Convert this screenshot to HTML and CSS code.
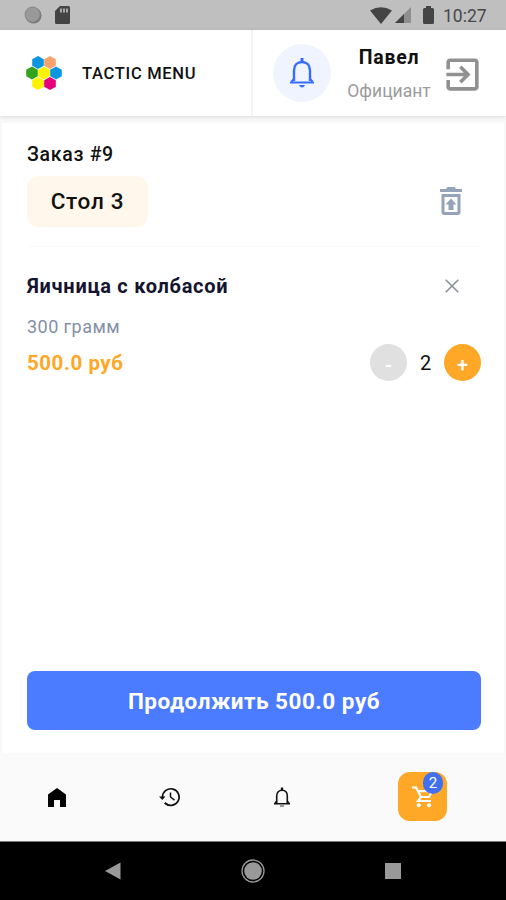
FILE: index.html
```html
<!DOCTYPE html>
<html lang="ru">
<head>
<meta charset="utf-8">
<title>Tactic Menu</title>
<link rel="stylesheet" href="styles.css">
</head>
<body>
<div class="statusbar">
  <svg width="18" height="18" viewBox="0 0 18 18"><circle cx="9.5" cy="9.5" r="8" fill="#777"/><circle cx="8.5" cy="8.5" r="7.5" fill="#999" stroke="#888"/></svg>
  <svg class="sd" width="15" height="18" viewBox="0 0 15 18"><path d="M5 0h8.500q1.500 0 1.500 1.500v15q0 1.500-1.500 1.500h-12Q0 18 0 16.500V5z" fill="#444"/><path d="M6 2.500v4M9 2.500v4M12 2.500v4" stroke="#bbb" stroke-width="1.700"/></svg>
  <span class="grow"></span>
  <svg width="22" height="17" viewBox="0 0 22 17"><path d="M0 3.500Q11-3 22 3.500L11 17z" fill="#444"/></svg>
  <svg class="signal" width="16" height="16" viewBox="0 0 16 16"><path d="M16 0v16H0z" fill="#8e8e8e"/><path d="M9 7v9H0z" fill="#444"/></svg>
  <svg class="battery" width="11" height="18" viewBox="0 0 11 18"><path d="M3 0h5v2h1.500Q11 2 11 3.500v13q0 1.500-1.500 1.500h-8Q0 18 0 16.500v-13Q0 2 1.500 2H3z" fill="#444"/></svg>
  <span class="clock">10:27</span>
</div>

<header class="header">
  <div class="brand">
    <svg width="36" height="36" viewBox="0 0 36 36">
      <path fill="#0c96e0" d="M12 1l5.800 3.200v6.600L12 14l-5.800-3.200V4.200z"/>
      <path fill="#f8a36c" d="M24 1l5.800 3.200v6.600L24 14l-5.800-3.200V4.200z"/>
      <path fill="#32a31b" d="M6 11.500l5.800 3.200v6.600L6 24.500.2 21.300v-6.600z"/>
      <path fill="#fff200" d="M18 11.500l5.800 3.200v6.600L18 24.500l-5.800-3.200v-6.600z"/>
      <path fill="#0c96e0" d="M30 11.500l5.800 3.200v6.600L30 24.500l-5.800-3.200v-6.600z"/>
      <path fill="#fff200" d="M12 22l5.800 3.200v6.600L12 35l-5.800-3.200v-6.600z"/>
      <path fill="#e6007e" d="M24 22l5.800 3.200v6.600L24 35l-5.800-3.200v-6.600z"/>
    </svg>
    <span class="brand-name">TACTIC MENU</span>
  </div>
  <div class="user">
    <div class="bell">
      <svg width="26" height="32" viewBox="0 0 26 32" fill="none" stroke="#356dff" stroke-width="2.400"><path d="M5 24V13.500C5 8 8.500 5 13 5s8 3 8 8.500V24"/><path d="M1 25.500h24M2.500 24.500L5 22m18.500 2.500L21 22" stroke-width="2"/><path d="M13 1v4" stroke-width="3"/><path d="M10 28h6q-1 2.500-3 2.500T10 28z" fill="#356dff" stroke="none"/></svg>
    </div>
    <div class="who"><span class="name">Павел</span><span class="role">Официант</span></div>
    <svg class="exit" width="43" height="43" viewBox="0 0 24 24" fill="#909090"><path d="M10.090 15.590L11.500 17l5-5-5-5-1.410 1.410L12.670 11H3v2h9.670l-2.580 2.590zM19 3H5c-1.110 0-2 .9-2 2v4h2V5h14v14H5v-4H3v4c0 1.100.89 2 2 2h14c1.100 0 2-.9 2-2V5c0-1.100-.9-2-2-2z"/></svg>
  </div>
</header>

<main class="order">
  <h1 class="order-title">Заказ #9</h1>
  <div class="table-row">
    <span class="table">Стол 3</span>
    <svg width="22" height="28" viewBox="0 0 22 28"><path fill="#94a3b8" fill-rule="evenodd" d="M0 2h6l1.500-2h7L16 2h6v3H0zM1.500 7h19v18q0 3-3 3h-13q-3 0-3-3zM4.500 10v15h13V10z"/><path fill="#94a3b8" d="M11 11.500l5.500 6h-3V23h-5v-5.500h-3z"/></svg>
  </div>
  <section class="item">
    <div class="item-head">
      <h2 class="item-name">Яичница с колбасой</h2>
      <svg width="14" height="14" viewBox="0 0 14 14"><path d="M.7.7l12.600 12.600M13.300.7L.7 13.300" stroke="#8b9299" stroke-width="1.600"/></svg>
    </div>
    <p class="weight">300 грамм</p>
    <div class="item-foot">
      <span class="price">500.0 руб</span>
      <div class="counter"><span class="step minus">-</span><span class="qty">2</span><span class="step plus">+</span></div>
    </div>
  </section>
  <div class="continue"><span>Продолжить 500.0 руб</span></div>
</main>

<nav class="tabs">
  <svg class="home" width="18" height="19" viewBox="0 0 18 19"><path d="M9 0l9 6.500V19h-6v-7H6v7H0V6.500z"/></svg>
  <svg class="history" width="22" height="20" viewBox="0 0 22 20" fill="none" stroke="#111" stroke-width="1.700"><path d="M3.500 10a8.300 8.300 0 1 1 2.300 5.800" /><path d="M5.800 15.800A8.300 8.300 0 0 0 9 17.800"/><path d="M0 9.500h6.500L3.300 13z" fill="#111" stroke="none"/><path d="M11.500 5.500V10l4 3.200" stroke-width="1.500"/></svg>
  <svg class="alerts" width="18" height="21" viewBox="0 0 18 21" fill="none" stroke="#111" stroke-width="1.600"><path d="M3.700 16V9C3.700 5.200 6 3.300 9 3.300s5.300 1.900 5.300 5.700v7"/><path d="M1 16.700h16M2 16l1.700-1.700M16 16l-1.700-1.700"/><path d="M9 .5v3" stroke-width="2.300"/><path d="M7 19h4" stroke-width="1.500" stroke="#777"/></svg>
  <div class="cart">
    <svg width="21" height="22" viewBox="0 0 21 22" fill="none" stroke="#fff" stroke-width="2.200"><path d="M0 1.500h4l5 9.500h8L20.500 4"/><path d="M5.500 5.200H17M9 11l-3 4h13"/><circle cx="6.700" cy="19.300" r="2" fill="#fff" stroke="none"/><circle cx="17" cy="19.300" r="2" fill="#fff" stroke="none"/></svg>
    <span class="badge">2</span>
  </div>
</nav>

<div class="android">
  <svg width="16" height="18" viewBox="0 0 16 18"><path d="M0 9L15.500.5v17z" fill="#999"/></svg>
  <svg class="circle" width="24" height="24" viewBox="0 0 24 24"><circle cx="12" cy="12" r="11" fill="none" stroke="#999" stroke-width="1.300"/><circle cx="12" cy="12" r="8.800" fill="#999"/></svg>
  <svg class="square" width="16" height="16" viewBox="0 0 16 16"><path d="M0 0h16v16H0z" fill="#999"/></svg>
</div>
</body>
</html>
```
FILE: styles.css
```css
* { box-sizing: border-box; }
body {
  margin: 0;
  width: 506px;
  height: 900px;
  display: flex;
  flex-direction: column;
  background: #f8f8f8;
  font-family: Roboto, sans-serif;
  color: #111;
  overflow: hidden;
}
h1, h2, p { margin: 0; }
svg { display: block; flex: none; }
span { white-space: nowrap; }

.statusbar {
  height: 30px;
  flex: none;
  display: flex;
  align-items: center;
  padding: 0 19px 0 24px;
  background: #bfbfbf;
}
.sd { margin-left: 13px; }
.grow { flex: 1; }
.signal { margin-left: 3px; }
.battery { margin-left: 12px; }
.clock { width: 44px; margin: 2px 0 0 9px; font-size: 17.5px; color: #484848; }

.header {
  height: 86px;
  flex: none;
  display: flex;
  background: #fff;
  box-shadow: 0 1px 4px rgba(0, 0, 0, .12);
}
.brand {
  width: 253px;
  display: flex;
  align-items: center;
  padding-left: 26px;
  gap: 20px;
  border-right: 2px solid #f4f4f4;
}
.brand-name { font-size: 16.5px; font-weight: 500; letter-spacing: .7px; }
.user { flex: 1; display: flex; align-items: center; padding-left: 20px; }
.bell {
  width: 58px;
  height: 58px;
  border-radius: 50%;
  background: #f0f4ff;
  display: flex;
  align-items: center;
  justify-content: center;
}
.who { width: 86px; margin: 1px 0 0 15px; display: flex; flex-direction: column; align-items: center; }
.name { font-size: 19.5px; line-height: 24px; font-weight: 700; letter-spacing: .7px; }
.role { margin-top: 10px; font-size: 17.5px; line-height: 22px; color: #9b9b9b; }
.exit { margin: 3px 0 0 9px; }

.order {
  height: 630px;
  flex: none;
  margin: 7px 2px 0;
  padding: 20px 23px 0 25px;
  background: #fff;
  display: flex;
  flex-direction: column;
}
.order-title { font-size: 19.5px; line-height: 24px; font-weight: 500; letter-spacing: .7px; }
.table-row {
  height: 80px;
  padding: 9px 19px 0 0;
  display: flex;
  justify-content: space-between;
  align-items: flex-start;
  border-bottom: 1px solid #fafafa;
}
.table-row svg { margin-top: 11px; }
.table {
  width: 121px;
  height: 51px;
  border-radius: 12px;
  background: #fff7eb;
  font-size: 22.5px;
  line-height: 51px;
  font-weight: 500;
  text-align: center;
  letter-spacing: .7px;
}
.item { padding-top: 26px; }
.item-head { display: flex; justify-content: space-between; align-items: center; padding-right: 22px; height: 26px; }
.item-name { font-size: 20px; font-weight: 700; letter-spacing: .7px; color: #15142f; }
.weight { margin-top: 17px; font-size: 18px; line-height: 22px; letter-spacing: .45px; color: #8290a6; }
.item-foot { margin-top: 6px; height: 37px; display: flex; justify-content: space-between; align-items: center; }
.price { font-size: 20.5px; font-weight: 700; letter-spacing: .55px; color: #ffa726; }
.counter { display: flex; align-items: center; }
.step {
  width: 37px;
  height: 37px;
  border-radius: 50%;
  color: #fff;
  font-size: 20px;
  font-weight: 500;
  line-height: 42px;
  text-align: center;
}
.minus { background: #e0e0e0; }
.plus { background: #ffa726; }
.qty { width: 37px; text-align: center; font-size: 20px; }
.continue {
  height: 59px;
  margin: auto 0 23px;
  border-radius: 8px;
  background: #4b7bff;
  color: #fff;
  display: flex;
  align-items: center;
  justify-content: center;
  font-size: 22.5px;
  font-weight: 700;
  letter-spacing: .5px;
}

.tabs {
  height: 88px;
  flex: none;
  display: flex;
  align-items: center;
  padding-left: 48px;
  background: #fafafa;
}
.history { margin-left: 93px; }
.alerts { margin-left: 92px; }
.cart {
  position: relative;
  width: 49px;
  height: 49px;
  margin: -1px 0 0 107px;
  border-radius: 12px;
  background: #ffa726;
  display: flex;
  align-items: center;
  justify-content: center;
}
.badge {
  position: absolute;
  top: 0;
  right: 4px;
  width: 20px;
  height: 22px;
  border-radius: 11px;
  background: #4271ef;
  color: #fff;
  font-size: 15px;
  line-height: 23px;
  text-align: center;
}

.android { height: 59px; flex: none; display: flex; align-items: center; padding-left: 105px; background: #000; border-top: 1px solid #777; }
.circle { margin-left: 120px; }
.square { margin-left: 120px; }
```
